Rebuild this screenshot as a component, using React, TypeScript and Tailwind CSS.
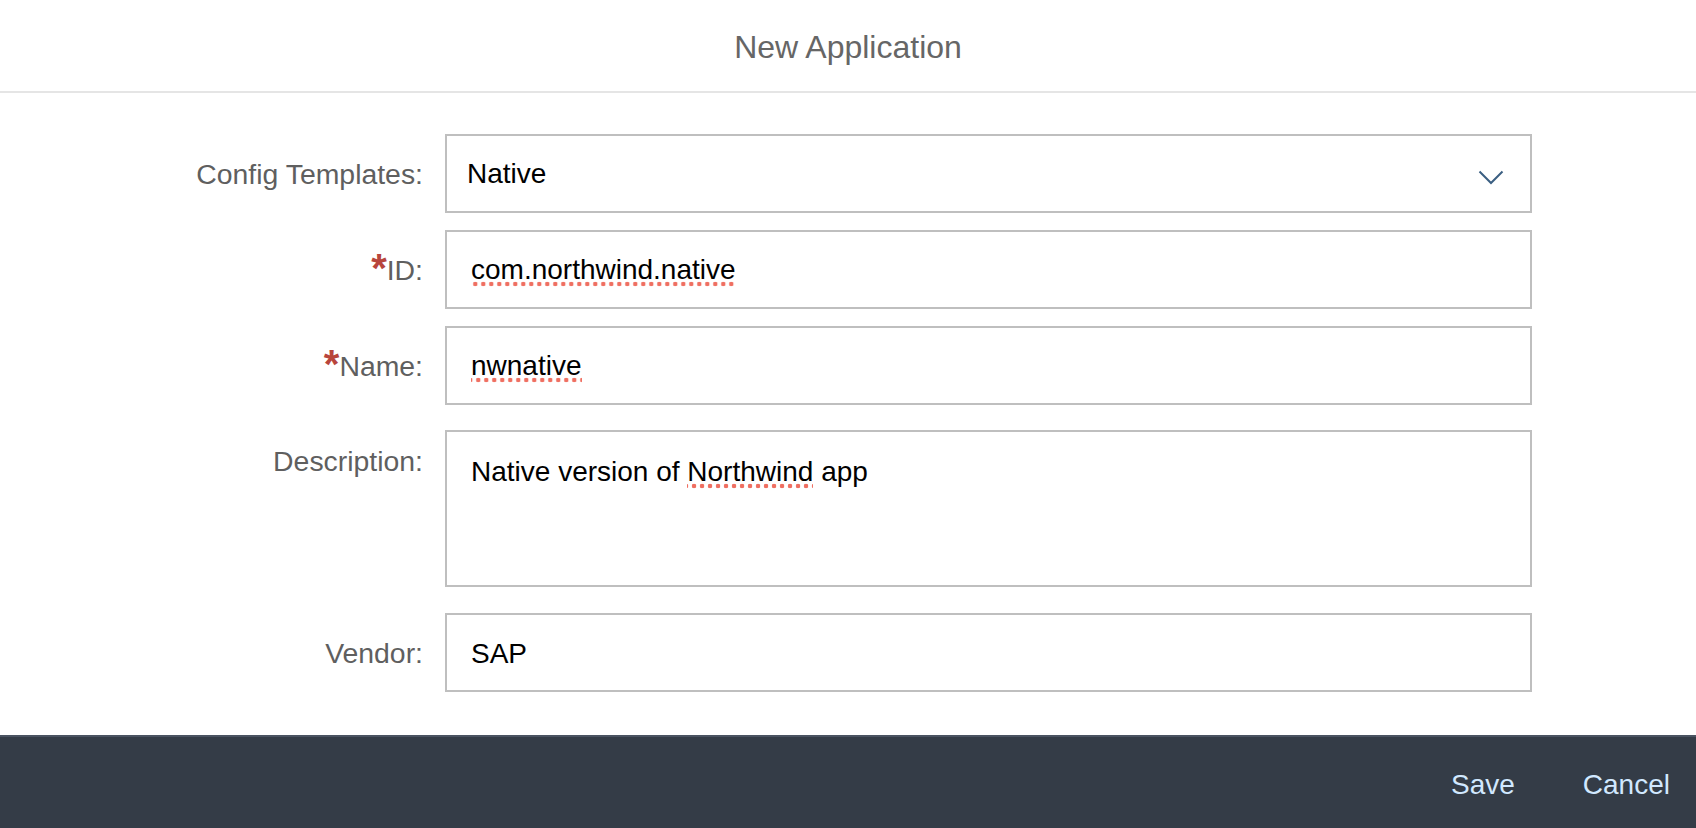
import React from 'react';

const spell =
  "bg-[image:radial-gradient(circle,#ef6f61_2px,transparent_2.6px)] bg-[length:8px_6px] bg-repeat-x bg-bottom pb-[1.5px]";

function Label({ text, required = false }: { text: string; required?: boolean }) {
  return (
    <div className="w-[423px] shrink-0 pt-[1px] text-right text-[28.4px] leading-[32px] text-[#5f5f5f]">
      {required && (
        <span className="relative top-[2px] text-[40px] font-bold leading-[0] text-[#b8453c]">*</span>
      )}
      {text}
    </div>
  );
}

function Field({ children }: { children: React.ReactNode }) {
  return (
    <div className="ml-[22px] flex h-[79px] w-[1087px] items-center border-2 border-[#bfbfbf] bg-white pl-[24px] pt-[2px] text-[28px] leading-[32px] text-black">
      {children}
    </div>
  );
}

export default function App() {
  return (
    <div className="flex h-[828px] w-full flex-col bg-white font-['Liberation_Sans',Arial,sans-serif]">
      <header className="flex h-[93px] shrink-0 items-center justify-center border-b-2 border-[#e5e5e5] pt-[2px] text-[32px] text-[#666666]">
        New Application
      </header>

      <main className="flex flex-1 flex-col pt-[41px]">
        <div className="flex items-center">
          <Label text="Config Templates:" />
          <div className="ml-[22px] flex h-[79px] w-[1087px] items-center justify-between border-2 border-[#bfbfbf] bg-white pl-[20px] pr-[26px] text-[28px] leading-[32px] text-black">
            <span>Native</span>
            <svg width="26" height="15" viewBox="0 0 26 15" fill="none" className="mt-[8px]">
              <path d="M1.5 1.5 L13 13 L24.5 1.5" stroke="#3b5f82" strokeWidth="2" />
            </svg>
          </div>
        </div>

        <div className="mt-[17px] flex items-center">
          <Label text="ID:" required />
          <Field>
            <span className={spell}>com.northwind.native</span>
          </Field>
        </div>

        <div className="mt-[17px] flex items-center">
          <Label text="Name:" required />
          <Field>
            <span className={spell}>nwnative</span>
          </Field>
        </div>

        <div className="mt-[25px] flex items-start">
          <div className="pt-[14px]">
            <Label text="Description:" />
          </div>
          <div className="ml-[22px] h-[157px] w-[1087px] border-2 border-[#bfbfbf] bg-white pl-[24px] pt-[24px] text-[28px] leading-[32px] text-black">
            Native version of <span className={spell}>Northwind</span> app
          </div>
        </div>

        <div className="mt-[26px] flex items-center">
          <Label text="Vendor:" />
          <Field>
            <span>SAP</span>
          </Field>
        </div>
      </main>

      <footer className="flex h-[93px] shrink-0 items-center justify-end gap-[68px] border-t-2 border-[#4a5361] bg-[#343c47] pr-[26px] pt-[5px] text-[28px] text-[#d1e8ff]">
        <button type="button">Save</button>
        <button type="button">Cancel</button>
      </footer>
    </div>
  );
}
